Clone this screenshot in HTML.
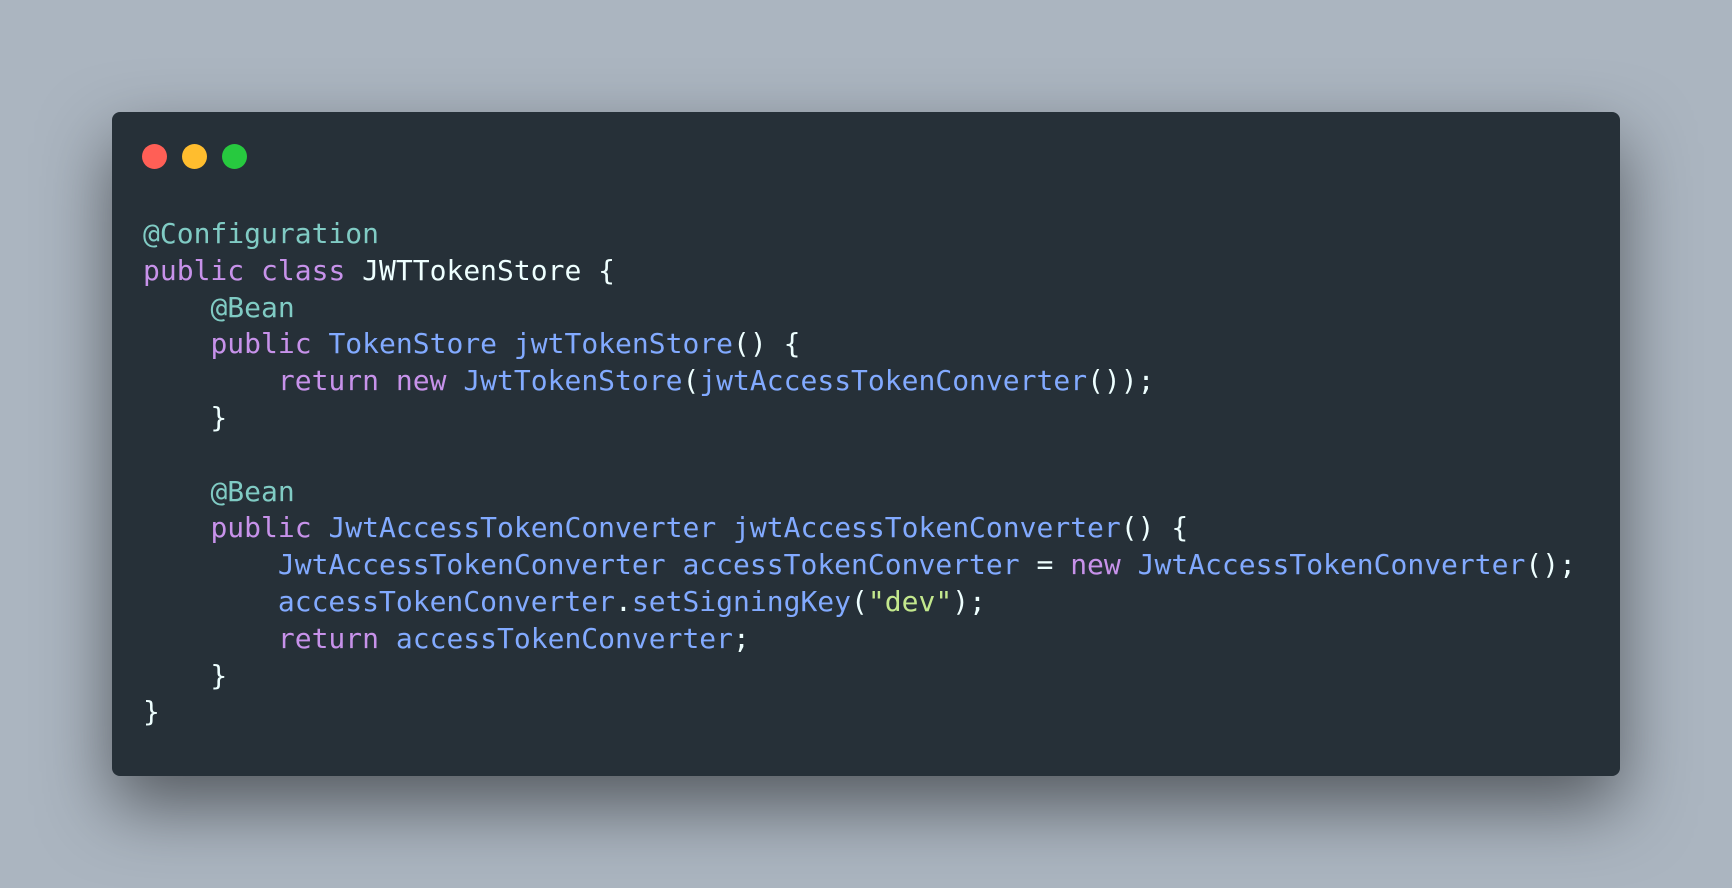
<!DOCTYPE html>
<html><head><meta charset="utf-8"><style>
html,body{margin:0;padding:0;}
body{width:1732px;height:888px;background:#abb5c0;position:relative;overflow:hidden;}
.card{position:absolute;left:112px;top:112px;width:1508px;height:664px;background:#263038;border-radius:8px;box-shadow:0 30px 70px rgba(0,0,0,0.5);}
.dot{position:absolute;top:144px;width:25px;height:25px;border-radius:50%;}
pre{position:absolute;left:143px;top:216px;margin:0;font-family:"DejaVu Sans Mono","Liberation Mono",monospace;font-size:28px;line-height:36.8px;color:#eeffff;}
.a{color:#80cbc4}.k{color:#c792ea}.b{color:#82aaff}.s{color:#c3e88d}
</style></head><body>
<div class="card"></div>
<div class="dot" style="left:142px;background:#ff5f56"></div>
<div class="dot" style="left:182px;background:#ffbd2e"></div>
<div class="dot" style="left:222px;background:#27c93f"></div>
<pre><span class="a">@Configuration</span>
<span class="k">public</span> <span class="k">class</span> JWTTokenStore {
    <span class="a">@Bean</span>
    <span class="k">public</span> <span class="b">TokenStore</span> <span class="b">jwtTokenStore</span>() {
        <span class="k">return</span> <span class="k">new</span> <span class="b">JwtTokenStore</span>(<span class="b">jwtAccessTokenConverter</span>());
    }

    <span class="a">@Bean</span>
    <span class="k">public</span> <span class="b">JwtAccessTokenConverter</span> <span class="b">jwtAccessTokenConverter</span>() {
        <span class="b">JwtAccessTokenConverter</span> <span class="b">accessTokenConverter</span> = <span class="k">new</span> <span class="b">JwtAccessTokenConverter</span>();
        <span class="b">accessTokenConverter</span>.<span class="b">setSigningKey</span>(<span class="s">"dev"</span>);
        <span class="k">return</span> <span class="b">accessTokenConverter</span>;
    }
}</pre>
</body></html>
